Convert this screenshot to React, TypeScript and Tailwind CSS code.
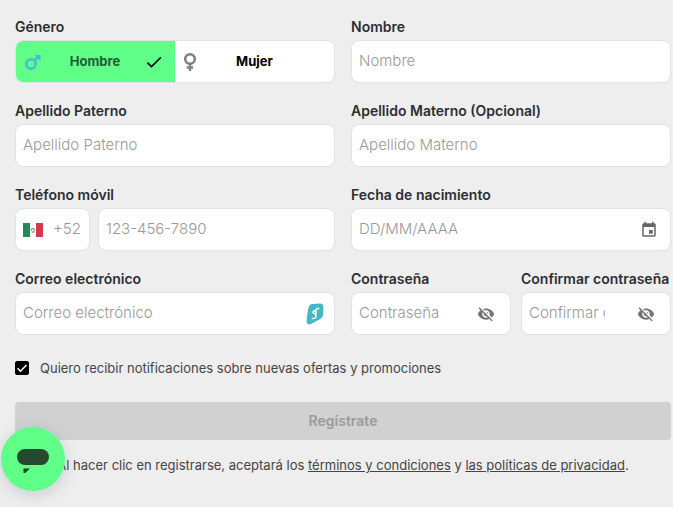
import type { ReactNode } from "react";
import { MdCheck, MdEvent, MdVisibilityOff } from "react-icons/md";

const boxClass =
  "flex items-center h-[43px] w-full rounded-lg border border-[#e2e2e2] bg-white overflow-hidden";

const inputClass =
  "w-full min-w-0 bg-transparent text-[15px] font-light text-[#333] placeholder:text-[#999] outline-none";

type FieldProps = {
  id: string;
  label: string;
  placeholder: string;
  type?: string;
  children?: ReactNode;
};

const Field = ({ id, label, placeholder, type = "text", children }: FieldProps) => {
  return (
    <div className="flex flex-col gap-[3px] min-w-0">
      <label htmlFor={id} className="text-sm font-semibold whitespace-nowrap">
        {label}
      </label>
      <div className={boxClass}>
        <input
          id={id}
          type={type}
          placeholder={placeholder}
          className={`${inputClass} ml-[7px]`}
        />
        {children}
      </div>
    </div>
  );
};

const MaleIcon = () => (
  <svg width="18" height="18" viewBox="0 0 18 18" fill="none" aria-hidden="true">
    <circle cx="7" cy="11" r="4.7" stroke="#4cb8dc" strokeWidth="2.5" />
    <path d="M10.5 7.5l4-4" stroke="#4cb8dc" strokeWidth="2.6" />
    <path d="M10.5 2h6v6z" fill="#4cb8dc" />
  </svg>
);

const FemaleIcon = () => (
  <svg width="14" height="20" viewBox="0 0 14 20" fill="none" stroke="#808080" aria-hidden="true">
    <circle cx="7" cy="7" r="4.8" strokeWidth="2.6" />
    <path d="M7 12v7M3.8 15.5h6.4" strokeWidth="2.4" />
  </svg>
);

const MexicoFlag = () => (
  <svg width="20" height="14" viewBox="0 0 20 14" className="shrink-0" aria-hidden="true">
    <path d="M0 0h20v14H0z" fill="#fff" />
    <path d="M0 0h7v14H0z" fill="#1c8a5a" />
    <path d="M13 0h7v14h-7z" fill="#d8364a" />
    <path
      d="M8.2 7.8c0-1.7 1-2.4 2-2.2 1 .2 1.5 1.2.8 2M8.8 8.6c.8.8 2 .6 2.5-.2"
      fill="none"
      stroke="#8a7a5a"
      strokeWidth="1.1"
    />
  </svg>
);

const SurfIcon = () => (
  <svg width="18" height="22" viewBox="0 0 18 22" fill="none" aria-hidden="true">
    <path
      d="M6.200 1L14 .5c2.200 0 3.300 1.200 3.300 3.300v6c0 3-.9 4.700-3 6.200L5.500 20.800C3.200 22 .6 21.300.6 19c.1-4.500 1-10.500 2-14.500C3.200 2.300 4.200 1.200 6.200 1z"
      fill="#45b8c8"
    />
    <path
      d="M12.800 5.600c-1.900-.2-2.700.5-2.800 2l-.2 6c-.1 1.500-1.100 2.200-3.300 1.900M10 7.500c-2 .1-3.200.9-3 2 .2 1 2.700.8 2.800 2.600"
      stroke="#fff"
      strokeWidth="1.500"
      strokeLinecap="round"
    />
  </svg>
);

const GenderPicker = () => {
  return (
    <fieldset className="flex flex-col min-w-0">
      <legend className="mb-[3px] text-sm font-semibold">Género</legend>
      <div className="flex h-[43px] rounded-lg border border-[#e2e2e2] bg-white overflow-hidden text-[13px] font-bold">
        <label className="relative flex w-1/2 items-center justify-between bg-[#5fff88] pl-2 pr-[11px] text-[#245c34] cursor-pointer">
          <input type="radio" name="genero" value="hombre" defaultChecked className="sr-only" />
          <MaleIcon />
          <span className="pl-1">Hombre</span>
          <MdCheck size={20} className="text-black" aria-hidden="true" />
        </label>
        <label className="relative flex w-1/2 items-center pl-2 text-black cursor-pointer">
          <input type="radio" name="genero" value="mujer" className="sr-only" />
          <FemaleIcon />
          <span className="flex-1 pr-[22px] text-center">Mujer</span>
        </label>
      </div>
    </fieldset>
  );
};

const PhoneField = () => {
  return (
    <div className="flex flex-col gap-[3px] min-w-0">
      <label htmlFor="telefono" className="text-sm font-semibold">
        Teléfono móvil
      </label>
      <div className="flex gap-2">
        <button
          type="button"
          className="flex items-center gap-[10px] h-[43px] w-[75px] shrink-0 rounded-lg border border-[#e2e2e2] bg-white pl-[7px] text-[15px] font-light text-[#999]"
        >
          <MexicoFlag />
          +52
        </button>
        <div className={boxClass}>
          <input
            id="telefono"
            type="tel"
            placeholder="123-456-7890"
            className={`${inputClass} ml-[7px]`}
          />
        </div>
      </div>
    </div>
  );
};

const ShowPassword = ({ label }: { label: string }) => (
  <button type="button" aria-label={label} className="ml-8 mr-[15px] shrink-0 text-[#757575]">
    <MdVisibilityOff size={18} />
  </button>
);

const ChatButton = () => {
  return (
    <button
      type="button"
      aria-label="Abrir chat"
      className="fixed bottom-4 left-px flex size-16 items-center justify-center rounded-full bg-[#5fff88] shadow-[0_4px_16px_rgba(60,90,110,0.22)]"
    >
      <svg width="32" height="28" viewBox="0 0 32 28" aria-hidden="true">
        <rect y="4" width="32" height="16" rx="8" fill="#26482f" />
        <path d="M6.500 23.500h6.500l-6.500 6z" fill="#17421f" />
      </svg>
    </button>
  );
};

const App = () => {
  return (
    <main className="min-h-screen bg-[#eee] pt-[17px] pl-[15px] pr-[2px] font-['Inter',sans-serif] text-[#2d2f33]">
      <form>
        <div className="grid grid-cols-2 gap-x-4 gap-y-[18px]">
          <GenderPicker />
          <Field id="nombre" label="Nombre" placeholder="Nombre" />
          <Field id="paterno" label="Apellido Paterno" placeholder="Apellido Paterno" />
          <Field id="materno" label="Apellido Materno (Opcional)" placeholder="Apellido Materno" />
          <PhoneField />
          <Field id="nacimiento" label="Fecha de nacimiento" placeholder="DD/MM/AAAA">
            <button type="button" aria-label="Elegir fecha" className="mr-3 shrink-0 text-[#666]">
              <MdEvent size={18} />
            </button>
          </Field>
          <Field id="correo" label="Correo electrónico" placeholder="Correo electrónico" type="email">
            <span className="mr-[10px] shrink-0">
              <SurfIcon />
            </span>
          </Field>
          <div className="grid grid-cols-[16fr_15fr] gap-[10px]">
            <Field id="contrasena" label="Contraseña" placeholder="Contraseña" type="password">
              <ShowPassword label="Mostrar contraseña" />
            </Field>
            <Field id="confirmar" label="Confirmar contraseña" placeholder="Confirmar contraseña" type="password">
              <ShowPassword label="Mostrar confirmación" />
            </Field>
          </div>
        </div>

        <label className="mt-[23px] flex items-center gap-[11px] text-[13px] leading-5 text-[#444]">
          <span className="grid shrink-0">
            <input
              type="checkbox"
              defaultChecked
              className="peer col-start-1 row-start-1 size-[14px] appearance-none rounded-xs border border-black bg-white checked:bg-black"
            />
            <svg
              viewBox="0 0 14 14"
              className="pointer-events-none col-start-1 row-start-1 size-[14px] opacity-0 peer-checked:opacity-100"
              fill="none"
              stroke="#fff"
              strokeWidth="1.5"
              aria-hidden="true"
            >
              <path d="M2.5 7.2l3 3 6-6.2" />
            </svg>
          </span>
          Quiero recibir notificaciones sobre nuevas ofertas y promociones
        </label>

        <button
          type="submit"
          disabled
          className="mt-6 h-[38px] w-full rounded-sm bg-[#d1d1d1] text-sm font-semibold text-[#9b9b9b]"
        >
          Regístrate
        </button>

        <p className="mt-[15px] text-center text-[13px] leading-5 text-[#444]">
          Al hacer clic en registrarse, aceptará los{" "}
          <a href="#terminos" className="underline">
            términos y condiciones
          </a>{" "}
          y{" "}
          <a href="#privacidad" className="underline">
            las políticas de privacidad
          </a>
          .
        </p>
      </form>
      <ChatButton />
    </main>
  );
};

export default App;
